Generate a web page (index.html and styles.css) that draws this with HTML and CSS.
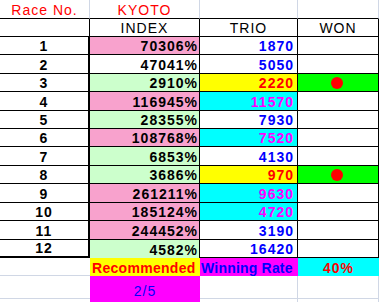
FILE: index.html
```html
<!DOCTYPE html>
<html>
<head>
<meta charset="utf-8">
<link rel="stylesheet" href="styles.css">
</head>
<body>
<div class="sheet">
  <div class="c hd ctr red">Race No.</div>
  <div class="c hd ctr red">KYOTO</div>
  <div class="c hd"></div>
  <div class="c hd"></div>

  <div class="c bk"></div>
  <div class="c bk ctr">INDEX</div>
  <div class="c bk ctr">TRIO</div>
  <div class="c bk ctr">WON</div>

  <div class="c bk no b">1</div><div class="c bk idx pink">70306%</div><div class="c bk trio blue">1870</div><div class="c bk"></div>
  <div class="c bk no b">2</div><div class="c bk idx">47041%</div><div class="c bk trio blue">5050</div><div class="c bk"></div>
  <div class="c bk no b">3</div><div class="c bk idx lgreen">2910%</div><div class="c bk trio yellow red">2220</div><div class="c bk won"><span class="dot"></span></div>
  <div class="c bk no b">4</div><div class="c bk idx pink">116945%</div><div class="c bk trio cyan mag">11570</div><div class="c bk"></div>
  <div class="c bk no b">5</div><div class="c bk idx lgreen">28355%</div><div class="c bk trio blue">7930</div><div class="c bk"></div>
  <div class="c bk no b">6</div><div class="c bk idx pink">108768%</div><div class="c bk trio cyan mag">7520</div><div class="c bk"></div>
  <div class="c bk no b">7</div><div class="c bk idx lgreen">6853%</div><div class="c bk trio blue">4130</div><div class="c bk"></div>
  <div class="c bk no b">8</div><div class="c bk idx lgreen">3686%</div><div class="c bk trio yellow red">970</div><div class="c bk won"><span class="dot"></span></div>
  <div class="c bk no b">9</div><div class="c bk idx pink">261211%</div><div class="c bk trio cyan mag">9630</div><div class="c bk"></div>
  <div class="c bk no b">10</div><div class="c bk idx pink">185124%</div><div class="c bk trio cyan mag">4720</div><div class="c bk"></div>
  <div class="c bk no b">11</div><div class="c bk idx pink">244452%</div><div class="c bk trio blue">3190</div><div class="c bk"></div>
  <div class="c bk no b last">12</div><div class="c bk idx lgreen nobot">4582%</div><div class="c bk trio blue">16420</div><div class="c bk"></div>

  <div class="c lb nor"></div>
  <div class="c fill yellow red bold rec">Recommended</div>
  <div class="c fill magenta blue bold wr">Winning Rate</div>
  <div class="c fill cyan red bold ctr">40%</div>

  <div class="c lb nor"></div>
  <div class="c fill magenta blue ctr">2/5</div>
  <div class="c lb"></div>
  <div class="c lb"></div>

  <div class="c tail"></div>
  <div class="c fill magenta"></div>
  <div class="c tail lr"></div>
  <div class="c tail lr"></div>
</div>
</body>
</html>
```

FILE: styles.css
```css
html, body {
  margin: 0;
  padding: 0;
  background: #ffffff;
}

.sheet {
  display: grid;
  grid-template-columns: 90px 110px 98px 81px;
  grid-template-rows: 19px 18px 18px 19px 18px 19px 18px 18px 19px 18px 19px 18px 19px 18px 18px 23px 3px;
  width: 379px;
  height: 302px;
  overflow: hidden;
  font-family: "Liberation Sans", Arial, sans-serif;
  font-size: 14px;
  line-height: 14px;
  letter-spacing: 1px;
  color: #000000;
}

.c {
  box-sizing: border-box;
  display: flex;
  align-items: flex-end;
  padding-bottom: 1px;
  white-space: nowrap;
  overflow: visible;
  min-width: 0;
}

/* header row with light grid lines */
.hd {
  border-right: 1px solid #d0d7e5;
  border-bottom: 1px solid #000000;
}

/* black bordered cells */
.bk {
  border-right: 1px solid #000000;
  border-bottom: 1px solid #000000;
}

/* light gridline cells */
.lb {
  border-right: 1px solid #d0d7e5;
  border-bottom: 1px solid #d0d7e5;
}
.lb.nor { border-right: none; }
.tail { border: none; }
.tail.lr { border-right: 1px solid #d0d7e5; }

.ctr { justify-content: center; }

.no {
  justify-content: center;
  border-right: 2px solid #000000;
  font-weight: bold;
}
.no.last { border-bottom: 2px solid #000000; }

.idx {
  justify-content: flex-end;
  padding-right: 1px;
  font-weight: bold;
}
.idx.nobot { border-bottom: none; }

.trio {
  justify-content: flex-end;
  padding-right: 3px;
  font-weight: bold;
}

.won {
  background: #00ff00;
  align-items: center;
  justify-content: center;
  padding-bottom: 0;
  padding-left: 0;
}
.dot {
  display: block;
  width: 12px;
  height: 12px;
  border-radius: 50%;
  background: #ff0000;
  margin-right: 2px;
}

.bold { font-weight: bold; }
.rec {
  padding-left: 2px;
  letter-spacing: 0.3px;
}
.wr {
  padding-left: 1px;
  letter-spacing: 0.2px;
}
.fill { border: none; }

/* colours */
.red { color: #ff0000; }
.blue { color: #0000ff; }
.mag { color: #ff00ff; }

.pink { background: #f8a2cd; }
.lgreen { background: #ccffcc; }
.yellow { background: #ffff00; }
.cyan { background: #00ffff; }
.magenta { background: #ff00ff; }
```
